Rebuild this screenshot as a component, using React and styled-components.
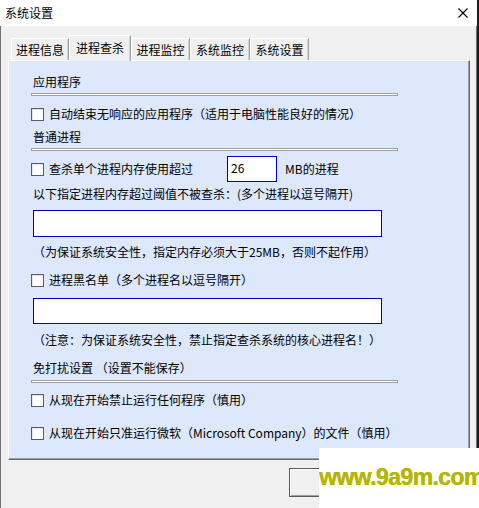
import React from 'react';
import styled, { createGlobalStyle } from 'styled-components';

const GlobalStyle = createGlobalStyle`
    html, body {
        margin: 0;
        padding: 0;
        background: #1c201c;
    }
    body {
        font-family: "Noto Sans CJK SC", "Noto Sans", sans-serif;
        font-size: 12px;
        color: #000;
    }
    * {
        box-sizing: border-box;
    }
`

const Screen = styled.div`
    position: relative;
    width: 479px;
    height: 508px;
    overflow: hidden;
`

const Window = styled.div`
    width: 477px;
    height: 508px;
    display: flex;
    flex-direction: column;
    background: #f0f0f0;
`

const TitleBar = styled.div`
    height: 26px;
    flex: none;
    background: #fff;
    display: flex;
    align-items: center;
    justify-content: space-between;
    padding: 0 9px 0 5px;
    line-height: 18px;
`

const Body = styled.div`
    flex: 1;
    border-left: 1px solid #707070;
    border-right: 1px solid #707070;
    padding: 9px 6px 0 7px;
    display: flex;
    flex-direction: column;
`

const TabStrip = styled.div`
    display: flex;
    align-items: flex-end;
    height: 26px;
    padding-left: 3px;
    margin-bottom: -1px;
    position: relative;
    z-index: 1;
`

const Tab = styled.div`
    width: ${p => p.$w}px;
    height: ${p => (p.$active ? 26 : 22)}px;
    margin-bottom: ${p => (p.$active ? 0 : 1)}px;
    padding-bottom: ${p => (p.$active ? 2 : 0)}px;
    display: flex;
    align-items: center;
    justify-content: center;
    background: #f0f0f0;
    border-top: 1px solid #fff;
    border-left: 1px solid #fff;
    border-right: 1px solid #a0a0a0;
    box-shadow: inset -1px 0 0 #d4d4d4;
    line-height: 18px;
`

const Panel = styled.div`
    width: 462px;
    height: 400px;
    background: #dde8fc;
    border-top: 1px solid #fff;
    border-left: 1px solid #fff;
    border-right: 1px solid #696969;
    border-bottom: 1px solid #696969;
    box-shadow: inset -1px -1px 0 #a0a0a0;
    padding: 12px 0 0 22px;
    display: flex;
    flex-direction: column;
    align-items: flex-start;
`

const SectionTitle = styled.div`
    height: 18px;
    line-height: 18px;
    padding-left: 2px;
    margin-top: ${p => p.$mt || 0}px;
    white-space: pre;
`

const Rule = styled.div`
    width: 367px;
    height: 3px;
    margin-top: ${p => p.$mt || 0}px;
    background: #fff;
    border: 1px solid #a0a0a0;
`

const CheckRow = styled.div`
    display: flex;
    align-items: center;
    height: ${p => p.$h || 18}px;
    margin-top: ${p => p.$mt || 0}px;
    line-height: 18px;
    white-space: nowrap;
`

const Box = styled.span`
    width: 13px;
    height: 13px;
    flex: none;
    background: #fff;
    border: 1px solid #5c5c5c;
    box-shadow: inset 1px 1px 0 #e6e6e6;
    margin-right: 5px;
`

const Label = styled.span`
    width: ${p => (p.$w ? `${p.$w}px` : 'auto')};
    flex: none;
`

const Text = styled.div`
    height: 18px;
    line-height: 18px;
    padding-left: 2px;
    margin-top: ${p => p.$mt || 0}px;
    white-space: nowrap;
`

const TextBox = styled.input`
    width: ${p => p.$w}px;
    height: ${p => p.$h}px;
    margin: ${p => p.$mt || 0}px 0 0 ${p => p.$ml || 0}px;
    padding: 0 3px 4px;
    border: 1px solid #0000cc;
    background: #fff;
    font: inherit;
    font-size: 12px;
    color: #000;
    outline: none;
`

const Unit = styled.span`
    margin-left: 8px;
`

const Footer = styled.div`
    display: flex;
    padding: 8px 0 0 281px;
`

const Button = styled.button`
    width: 88px;
    height: 29px;
    background: #f0f0f0;
    border: 1px solid #5a5a5a;
    box-shadow: inset 1px 1px 0 #fff, inset -1px -1px 0 #a0a0a0;
`

const Watermark = styled.div`
    position: absolute;
    left: 319px;
    top: 448px;
    width: 160px;
    height: 60px;
    background: #fff;
    display: flex;
    align-items: center;
    padding-bottom: 1px;
    overflow: hidden;
    white-space: nowrap;
    font-family: "Liberation Sans", Arial, sans-serif;
    font-weight: 700;
    font-size: 23px;
    line-height: 1;
    letter-spacing: -0.6px;
    color: #b3b701;
    text-shadow: 0.5px 0 0 #b3b701;
`

const tabs = [
    { name: '进程信息', w: 58 },
    { name: '进程查杀', w: 62, active: true },
    { name: '进程监控', w: 59 },
    { name: '系统监控', w: 60 },
    { name: '系统设置', w: 59 },
];

const CloseIcon = () => (
    <svg width="10" height="10" viewBox="0 0 10 10">
        <path d="M0.5 0.5 L9.5 9.5 M9.5 0.5 L0.5 9.5" stroke="#000" strokeWidth="1.1" fill="none" />
    </svg>
);

const Check = ({ children, ...rest }) => (
    <CheckRow {...rest}>
        <Box />
        {children}
    </CheckRow>
);

const App = () => {
    return (
        <Screen>
            <GlobalStyle />
            <Window>
                <TitleBar>
                    <span>系统设置</span>
                    <CloseIcon />
                </TitleBar>
                <Body>
                    <TabStrip>
                        {tabs.map(t => (
                            <Tab key={t.name} $w={t.w} $active={t.active}>
                                {t.name}
                            </Tab>
                        ))}
                    </TabStrip>
                    <Panel>
                        <SectionTitle>应用程序</SectionTitle>
                        <Rule $mt={2} />
                        <Check $mt={9}>
                            <Label>自动结束无响应的应用程序（适用于电脑性能良好的情况）</Label>
                        </Check>

                        <SectionTitle $mt={5}>普通进程</SectionTitle>
                        <Rule $mt={2} />
                        <Check $mt={5} $h={26}>
                            <Label $w={178}>查杀单个进程内存使用超过</Label>
                            <TextBox $w={50} $h={26} defaultValue="26" readOnly />
                            <Unit>MB的进程</Unit>
                        </Check>
                        <Text $mt={3}>以下指定进程内存超过阈值不被查杀：(多个进程以逗号隔开)</Text>
                        <TextBox $w={349} $h={27} $mt={7} $ml={2} readOnly />
                        <Text $mt={6}>（为保证系统安全性，指定内存必须大于25MB，否则不起作用）</Text>

                        <Check $mt={10}>
                            <Label>进程黑名单（多个进程名以逗号隔开）</Label>
                        </Check>
                        <TextBox $w={349} $h={26} $mt={9} $ml={2} readOnly />
                        <Text $mt={7}>（注意：为保证系统安全性，禁止指定查杀系统的核心进程名！）</Text>

                        <SectionTitle $mt={10}>免打扰设置 （设置不能保存）</SectionTitle>
                        <Rule $mt={3} />
                        <Check $mt={8}>
                            <Label>从现在开始禁止运行任何程序（慎用）</Label>
                        </Check>
                        <Check $mt={15}>
                            <Label>从现在开始只准运行微软（Microsoft Company）的文件（慎用）</Label>
                        </Check>
                    </Panel>
                    <Footer>
                        <Button aria-label="确定" />
                    </Footer>
                </Body>
            </Window>
            <Watermark>www.9a9m.com</Watermark>
        </Screen>
    );
};

export default App;
